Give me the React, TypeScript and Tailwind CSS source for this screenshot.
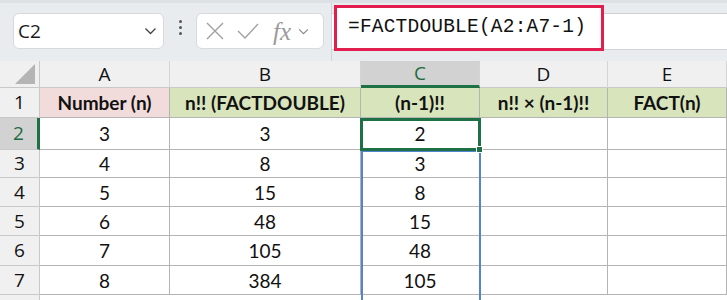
import React from "react";

const cols = ["A", "B", "C", "D", "E"];
const rowHeights = ["h-[30px]", "h-[32px]", "h-[28px]", "h-[29px]", "h-[29px]", "h-[30px]", "h-[29px]"];

const data: string[][] = [
  ["3", "3", "2", "", ""],
  ["4", "8", "3", "", ""],
  ["5", "15", "8", "", ""],
  ["6", "48", "15", "", ""],
  ["7", "105", "48", "", ""],
  ["8", "384", "105", "", ""],
];

const headers = ["Number (n)", "n!! (FACTDOUBLE)", "(n-1)!!", "n!! × (n-1)!!", "FACT(n)"];

const Chevron = ({ className }: { className?: string }) => (
  <svg viewBox="0 0 12 8" className={className} fill="none" stroke="currentColor" strokeWidth="1.3">
    <path d="M1 1.5 L6 6.5 L11 1.5" />
  </svg>
);

const Toolbar = () => {
  return (
    <div className="h-[61px] bg-[#e9ecef] border-t-[3px] border-[#dde1e5] flex items-start">
      <div className="mt-[10px] ml-[13px] w-[151px] h-[36px] bg-white rounded-[6px] border border-[#d6d9dd] flex items-center justify-between pl-[4px] pr-[6px]">
        <span className="text-[19px] text-[#1a1a1a] font-['Open_Sans',sans-serif]">C2</span>
        <Chevron className="w-[13px] h-[8px] text-[#444]" />
      </div>
      <div className="mt-[17px] w-[32px] flex flex-col items-center gap-[3px]">
        <span className="w-[3px] h-[3px] rounded-full bg-[#555]" />
        <span className="w-[3px] h-[3px] rounded-full bg-[#555]" />
        <span className="w-[3px] h-[3px] rounded-full bg-[#555]" />
      </div>
      <div className="mt-[10px] w-[128px] h-[36px] bg-white rounded-[6px] border border-[#d6d9dd] flex items-center pl-[9px]">
        <svg viewBox="0 0 18 18" className="w-[18px] h-[18px]" stroke="#a0a0a0" strokeWidth="1.4" fill="none">
          <path d="M1 1 L17 17 M17 1 L1 17" />
        </svg>
        <svg viewBox="0 0 22 16" className="w-[22px] h-[16px] ml-[13px]" stroke="#a0a0a0" strokeWidth="1.4" fill="none">
          <path d="M1 8 L8 15 L21 1" />
        </svg>
        <span className="ml-[14px] text-[25px] leading-none italic text-[#9a9a9a] font-['Liberation_Serif',serif]">fx</span>
        <Chevron className="ml-[7px] w-[11px] h-[7px] text-[#888]" />
      </div>
      <div className="ml-[7px] h-full border-l border-[#d0d4d8] flex-1 relative">
        <div className="mt-[10px] h-[37px] bg-white border-y border-[#cfd3d7]" />
        <div className="absolute left-[2px] top-[2px] w-[270px] h-[46px] border-[3px] border-[#e21e4f] bg-white flex items-center pl-[11px]">
          <span className="text-[19.5px] text-[#111] font-['Liberation_Mono',monospace] tracking-[0.2px]">=FACTDOUBLE(A2:A7-1)</span>
        </div>
      </div>
    </div>
  );
};

const Sheet = () => {
  const grid = "grid grid-cols-[40px_130px_191px_119px_128px_1fr] grid-rows-[100%] overflow-hidden";
  const cellFont = "font-['Lato',sans-serif] text-[19px] leading-none text-[#111]";
  const headFont = "text-[19px] leading-none font-['Open_Sans',sans-serif]";
  const line = "border-r border-b border-[#b4b4b4]";
  return (
    <div className="relative">
      <div className={`${grid} h-[27px] bg-[#f0f0f0]`}>
        <div className="border-r border-[#c8c8c8] border-b border-[#c8c8c8] relative">
          <svg viewBox="0 0 20 20" className="absolute right-[4px] bottom-[3px] w-[20px] h-[20px]">
            <path d="M20 0 L20 20 L0 20 Z" fill="#b4b4b4" />
          </svg>
        </div>
        {cols.map((c) => (
          <div
            key={c}
            className={`flex items-center justify-center ${headFont} border-r border-[#d4d4d4] ${
              c === "C" ? "bg-[#d2d2d2] text-[#1e6b41] border-b-[3px] border-b-[#1e7145]" : "text-[#111] border-b border-b-[#c8c8c8]"
            }`}
          >
            {c}
          </div>
        ))}
      </div>
      <div className={`${grid} ${rowHeights[0]}`}>
        <div className={`bg-[#f0f0f0] border-r border-b border-[#c8c8c8] flex items-center justify-center text-[#111] ${headFont}`}>
          1
        </div>
        {headers.map((h, i) => (
          <div
            key={h}
            className={`flex items-center justify-center font-bold ${line} ${cellFont} ${
              i === 0 ? "bg-[#f2dcdb]" : "bg-[#d8e4bc]"
            }`}
          >
            {h}
          </div>
        ))}
      </div>
      {data.map((row, r) => (
        <div key={r} className={`${grid} ${rowHeights[r + 1]}`}>
          <div
            className={`flex items-center justify-center ${headFont} border-b border-[#c8c8c8] ${
              r === 0 ? "bg-[#d2d2d2] text-[#1e6b41] border-r-[3px] border-r-[#1e7145]" : "bg-[#f0f0f0] text-[#111] border-r border-r-[#c8c8c8]"
            }`}
          >
            {r + 2}
          </div>
          {row.map((v, i) => (
            <div key={i} className={`flex items-center justify-center bg-white ${line} ${cellFont}`}>
              {v}
            </div>
          ))}
        </div>
      ))}
      <div className={`${grid} h-[10px]`}>
        <div className="bg-[#f0f0f0] border-r border-[#c8c8c8]" />
      </div>
      {/* spill range C3:C7 */}
      <div className="absolute left-[361px] top-[89px] w-[120px] h-[208px] border-2 border-[#5683cf] pointer-events-none" />
      {/* active cell C2 */}
      <div className="absolute left-[360px] top-[57px] w-[121px] h-[33px] border-[3px] border-[#1e7145] pointer-events-none">
        <div className="absolute -right-[5px] -bottom-[5px] w-[7px] h-[7px] bg-[#1e7145] border border-white" />
      </div>
    </div>
  );
};

export default function App() {
  return (
    <div className="w-[727px] h-[300px] overflow-hidden bg-white">
      <Toolbar />
      <Sheet />
    </div>
  );
}
